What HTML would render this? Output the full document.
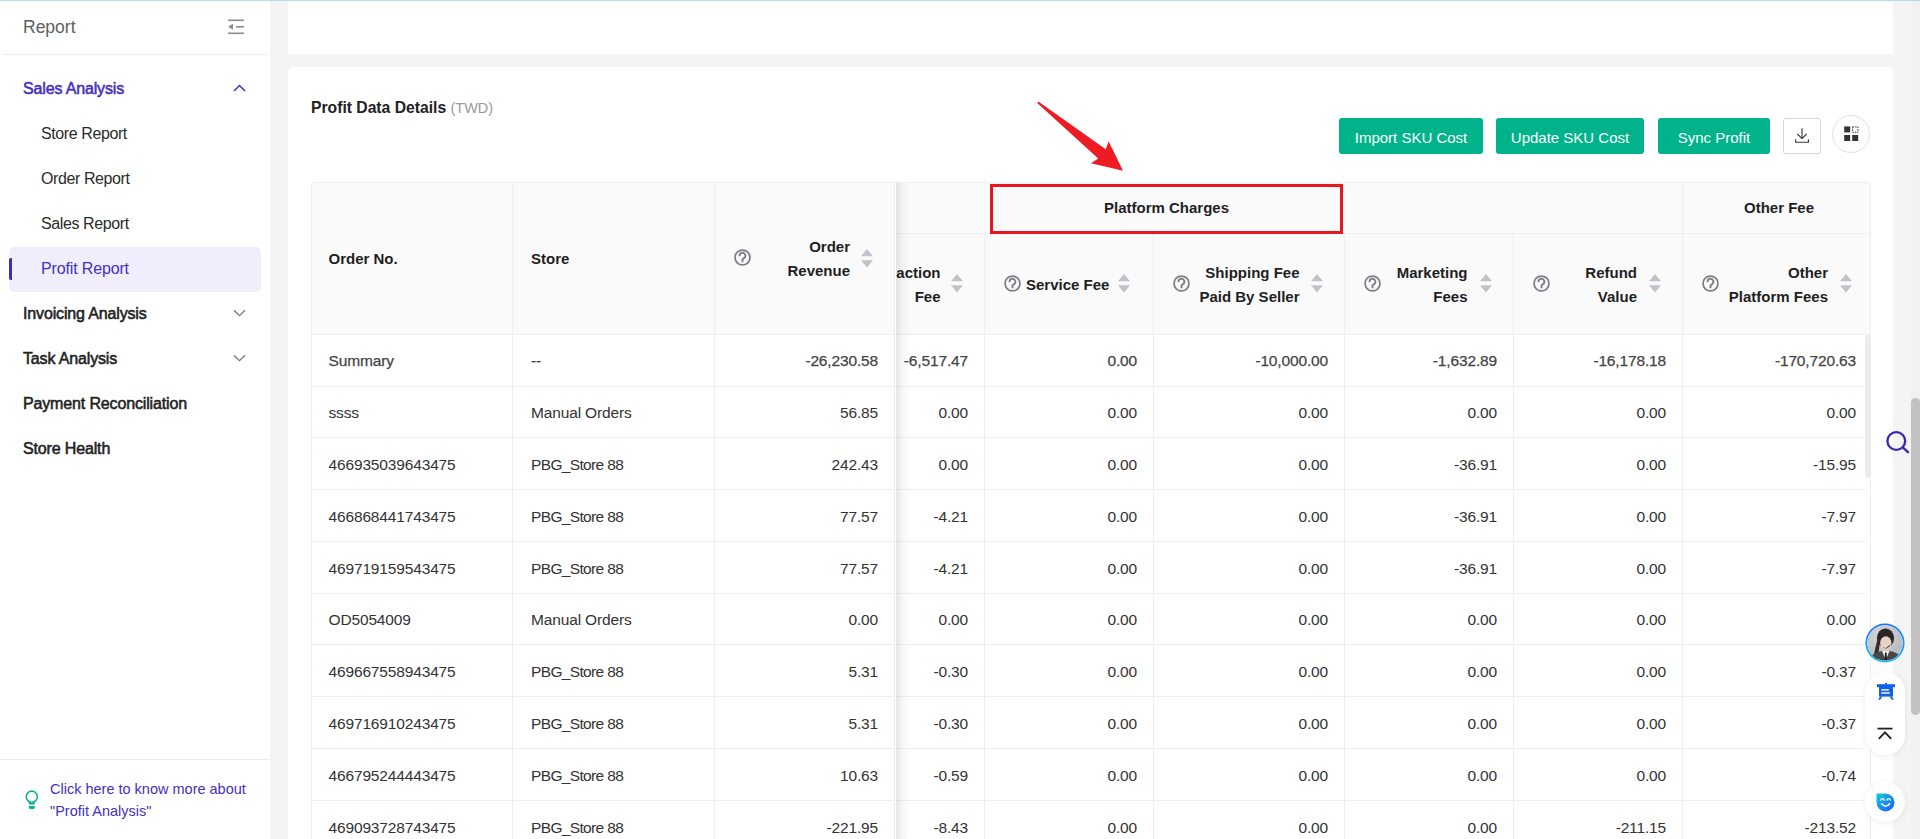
<!DOCTYPE html><html><head><meta charset="utf-8"><style>
*{box-sizing:border-box;margin:0;padding:0}
html,body{width:1920px;height:839px;overflow:hidden;background:#f4f4f4;font-family:"Liberation Sans", sans-serif;}
.a{position:absolute}
.t{position:absolute;white-space:nowrap;line-height:20px}
#side{position:absolute;left:0;top:0;width:270px;height:839px;background:#fff}
.si{position:absolute;left:41px;font-size:16px;color:#2b2b2b;letter-spacing:-0.4px;white-space:nowrap;line-height:20px}
.sh{position:absolute;left:23px;font-size:16px;font-weight:normal;-webkit-text-stroke:0.55px currentColor;color:#222;letter-spacing:-0.15px;white-space:nowrap;line-height:20px}
.cell{position:absolute;font-size:15.5px;letter-spacing:-0.15px;color:#333;white-space:nowrap;line-height:20px}
.hb{position:absolute;background:#efefef}
.ht{position:absolute;font-size:15px;font-weight:bold;color:#1f1f1f;white-space:nowrap;line-height:24px}
.q{position:absolute;width:17px;height:17px}
.so{position:absolute;width:12px;height:19px}
.btn{position:absolute;top:118px;height:36px;background:#00b38a;border-radius:3px;color:#fff;font-size:15px;line-height:39px;text-align:center;white-space:nowrap}
</style></head><body>
<div class="a" style="left:0;top:0;width:1920px;height:1px;background:#b7d9ec;z-index:50"></div>
<div id="side">
<div class="a" style="left:0;top:0;width:270px;height:55px;border-bottom:1px solid #ececec;border-radius:0 0 5px 5px"></div>
<div class="t" style="left:23px;top:17px;font-size:17.5px;color:#606060;line-height:20px">Report</div>
<svg class="a" style="left:227px;top:18px" width="18" height="18" viewBox="0 0 18 18"><rect x="1" y="1.5" width="16" height="1.6" fill="#8c8c94"/><rect x="1" y="14.5" width="16" height="1.6" fill="#8c8c94"/><rect x="9" y="8" width="8" height="1.6" fill="#8c8c94"/><path d="M1 8.8 L6 5.8 L6 11.8 Z" fill="#8c8c94"/></svg>
<div class="sh" style="top:78.5px;color:#4531bd">Sales Analysis</div>
<svg class="a" style="left:233px;top:84px" width="13" height="8" viewBox="0 0 13 8"><path d="M1 7 L6.5 1.5 L12 7" fill="none" stroke="#4531bd" stroke-width="1.5"/></svg>
<div class="si" style="top:123.5px">Store Report</div>
<div class="si" style="top:168.5px">Order Report</div>
<div class="si" style="top:213.5px">Sales Report</div>
<div class="a" style="left:9px;top:247px;width:252px;height:45px;background:#f0eefd;border-radius:5px"></div>
<div class="a" style="left:9px;top:258px;width:3px;height:22px;background:#3f2bb6;border-radius:2px 0 0 2px"></div>
<div class="si" style="top:258.5px;color:#4531bd;letter-spacing:-0.15px">Profit Report</div>
<div class="sh" style="top:303.5px">Invoicing Analysis</div>
<svg class="a" style="left:233px;top:309px" width="13" height="8" viewBox="0 0 13 8"><path d="M1 1.2 L6.5 6.7 L12 1.2" fill="none" stroke="#757582" stroke-width="1.3"/></svg>
<div class="sh" style="top:348.5px">Task Analysis</div>
<svg class="a" style="left:233px;top:354px" width="13" height="8" viewBox="0 0 13 8"><path d="M1 1.2 L6.5 6.7 L12 1.2" fill="none" stroke="#757582" stroke-width="1.3"/></svg>
<div class="sh" style="top:393.5px">Payment Reconciliation</div>
<div class="sh" style="top:438.5px">Store Health</div>
<div class="a" style="left:0;top:759px;width:270px;height:1px;background:#ececec"></div>
<svg class="a" style="left:20px;top:785px" width="25" height="30" viewBox="0 0 25 30"><circle cx="11.8" cy="11.7" r="5.5" fill="none" stroke="#0db38c" stroke-width="1.75"/><path d="M8.9 15.2 L14.7 15.2 L14.7 19.6 L8.9 19.6 Z" fill="#0db38c"/><path d="M10.2 15 L13.4 15 L11.8 17.6 Z" fill="#fff"/><circle cx="11.8" cy="11.7" r="4.62" fill="#fff"/><path d="M8.8 21 L14.8 21 L14.8 22.5 Q14.8 24.1 13.2 24.1 L10.4 24.1 Q8.8 24.1 8.8 22.5 Z" fill="#0db38c"/></svg>
<div class="t" style="left:50px;top:778px;font-size:14.5px;color:#4531bd;line-height:22px">Click here to know more about<br>"Profit Analysis"</div>
</div>
<div class="a" style="left:288px;top:-10px;width:1605px;height:64px;background:#fff"></div>
<div class="a" style="left:288px;top:67px;width:1605px;height:800px;background:#fff;border-radius:5px"></div>
<div class="t" style="left:311px;top:97.5px;font-size:15.7px;font-weight:bold;color:#222">Profit Data Details <span style="font-weight:normal;color:#9a9a9a;font-size:14.5px">(TWD)</span></div>
<div class="btn" style="left:1339px;width:144px">Import SKU Cost</div>
<div class="btn" style="left:1496px;width:148px">Update SKU Cost</div>
<div class="btn" style="left:1658px;width:112px">Sync Profit</div>
<div class="a" style="left:1783px;top:118px;width:38px;height:36px;border:1px solid #d6d6d6;border-radius:3px;background:#fff;box-shadow:0 2px 0 rgba(0,0,0,0.015)"></div>
<svg class="a" style="left:1793px;top:126px" width="18" height="18" viewBox="0 0 18 18"><path d="M9 2.2 L9 12.3 M4.3 8 L9 12.6 L13.7 8" fill="none" stroke="#333" stroke-width="1.1"/><path d="M2.6 13.2 L2.6 16.3 L15.4 16.3 L15.4 13.2" fill="none" stroke="#333" stroke-width="1.1" stroke-linejoin="round"/></svg>
<div class="a" style="left:1832px;top:115px;width:38px;height:38px;border:1px solid #e1e1ea;border-radius:50%;background:#fff"></div>
<svg class="a" style="left:1843px;top:125px" width="18" height="18" viewBox="0 0 18 18"><rect x="1.2" y="1.4" width="6" height="6" fill="#333"/><rect x="9.6" y="1.9" width="5.4" height="5.4" fill="none" stroke="#333" stroke-width="1" stroke-dasharray="1.5 1"/><rect x="1.2" y="10" width="6" height="6" fill="#333"/><rect x="9.2" y="10" width="6" height="6" fill="#333"/></svg>
<div class="a" style="left:311px;top:182px;width:1560px;height:152px;background:#fafafa;border:1px solid #efefef;border-bottom:none;border-radius:4px 4px 0 0"></div>
<div class="hb" style="left:311px;top:334px;width:1559px;height:1px"></div>
<div class="hb" style="left:895px;top:233px;width:975px;height:1px"></div>
<div class="hb" style="left:512px;top:182px;width:1px;height:152px"></div>
<div class="hb" style="left:714px;top:182px;width:1px;height:152px"></div>
<div class="hb" style="left:984px;top:233px;width:1px;height:101px"></div>
<div class="hb" style="left:1153px;top:233px;width:1px;height:101px"></div>
<div class="hb" style="left:1344px;top:233px;width:1px;height:101px"></div>
<div class="hb" style="left:1513px;top:233px;width:1px;height:101px"></div>
<div class="hb" style="left:1682px;top:182px;width:1px;height:152px"></div>
<div class="hb" style="left:1870px;top:186px;width:1px;height:700px"></div>
<div class="hb" style="left:311px;top:386px;width:1554px;height:1px"></div>
<div class="hb" style="left:311px;top:437px;width:1554px;height:1px"></div>
<div class="hb" style="left:311px;top:489px;width:1554px;height:1px"></div>
<div class="hb" style="left:311px;top:541px;width:1554px;height:1px"></div>
<div class="hb" style="left:311px;top:593px;width:1554px;height:1px"></div>
<div class="hb" style="left:311px;top:644px;width:1554px;height:1px"></div>
<div class="hb" style="left:311px;top:696px;width:1554px;height:1px"></div>
<div class="hb" style="left:311px;top:748px;width:1554px;height:1px"></div>
<div class="hb" style="left:311px;top:800px;width:1554px;height:1px"></div>
<div class="hb" style="left:311px;top:852px;width:1554px;height:1px"></div>
<div class="hb" style="left:512px;top:334px;width:1px;height:600px"></div>
<div class="hb" style="left:714px;top:334px;width:1px;height:600px"></div>
<div class="hb" style="left:984px;top:334px;width:1px;height:600px"></div>
<div class="hb" style="left:1153px;top:334px;width:1px;height:600px"></div>
<div class="hb" style="left:1344px;top:334px;width:1px;height:600px"></div>
<div class="hb" style="left:1513px;top:334px;width:1px;height:600px"></div>
<div class="hb" style="left:1682px;top:334px;width:1px;height:600px"></div>
<div class="hb" style="left:311px;top:186px;width:1px;height:700px"></div>
<div class="cell" style="left:328.5px;top:351.30px;color:#454545;-webkit-text-stroke:0.25px #454545;">Summary</div>
<div class="cell" style="left:531px;top:351.30px;color:#454545;-webkit-text-stroke:0.25px #454545;">--</div>
<div class="cell" style="right:1042px;top:351.30px;color:#454545;-webkit-text-stroke:0.25px #454545;">-26,230.58</div>
<div class="cell" style="right:952px;top:351.30px;color:#454545;-webkit-text-stroke:0.25px #454545;">-6,517.47</div>
<div class="cell" style="right:783px;top:351.30px;color:#454545;-webkit-text-stroke:0.25px #454545;">0.00</div>
<div class="cell" style="right:592px;top:351.30px;color:#454545;-webkit-text-stroke:0.25px #454545;">-10,000.00</div>
<div class="cell" style="right:423px;top:351.30px;color:#454545;-webkit-text-stroke:0.25px #454545;">-1,632.89</div>
<div class="cell" style="right:254px;top:351.30px;color:#454545;-webkit-text-stroke:0.25px #454545;">-16,178.18</div>
<div class="cell" style="right:64px;top:351.30px;color:#454545;-webkit-text-stroke:0.25px #454545;">-170,720.63</div>
<div class="cell" style="left:328.5px;top:403.13px;">ssss</div>
<div class="cell" style="left:531px;top:403.13px;">Manual Orders</div>
<div class="cell" style="right:1042px;top:403.13px;">56.85</div>
<div class="cell" style="right:952px;top:403.13px;">0.00</div>
<div class="cell" style="right:783px;top:403.13px;">0.00</div>
<div class="cell" style="right:592px;top:403.13px;">0.00</div>
<div class="cell" style="right:423px;top:403.13px;">0.00</div>
<div class="cell" style="right:254px;top:403.13px;">0.00</div>
<div class="cell" style="right:64px;top:403.13px;">0.00</div>
<div class="cell" style="left:328.5px;top:454.96px;">466935039643475</div>
<div class="cell" style="left:531px;top:454.96px;letter-spacing:-0.65px;">PBG_Store 88</div>
<div class="cell" style="right:1042px;top:454.96px;">242.43</div>
<div class="cell" style="right:952px;top:454.96px;">0.00</div>
<div class="cell" style="right:783px;top:454.96px;">0.00</div>
<div class="cell" style="right:592px;top:454.96px;">0.00</div>
<div class="cell" style="right:423px;top:454.96px;">-36.91</div>
<div class="cell" style="right:254px;top:454.96px;">0.00</div>
<div class="cell" style="right:64px;top:454.96px;">-15.95</div>
<div class="cell" style="left:328.5px;top:506.79px;">466868441743475</div>
<div class="cell" style="left:531px;top:506.79px;letter-spacing:-0.65px;">PBG_Store 88</div>
<div class="cell" style="right:1042px;top:506.79px;">77.57</div>
<div class="cell" style="right:952px;top:506.79px;">-4.21</div>
<div class="cell" style="right:783px;top:506.79px;">0.00</div>
<div class="cell" style="right:592px;top:506.79px;">0.00</div>
<div class="cell" style="right:423px;top:506.79px;">-36.91</div>
<div class="cell" style="right:254px;top:506.79px;">0.00</div>
<div class="cell" style="right:64px;top:506.79px;">-7.97</div>
<div class="cell" style="left:328.5px;top:558.62px;">469719159543475</div>
<div class="cell" style="left:531px;top:558.62px;letter-spacing:-0.65px;">PBG_Store 88</div>
<div class="cell" style="right:1042px;top:558.62px;">77.57</div>
<div class="cell" style="right:952px;top:558.62px;">-4.21</div>
<div class="cell" style="right:783px;top:558.62px;">0.00</div>
<div class="cell" style="right:592px;top:558.62px;">0.00</div>
<div class="cell" style="right:423px;top:558.62px;">-36.91</div>
<div class="cell" style="right:254px;top:558.62px;">0.00</div>
<div class="cell" style="right:64px;top:558.62px;">-7.97</div>
<div class="cell" style="left:328.5px;top:610.45px;">OD5054009</div>
<div class="cell" style="left:531px;top:610.45px;">Manual Orders</div>
<div class="cell" style="right:1042px;top:610.45px;">0.00</div>
<div class="cell" style="right:952px;top:610.45px;">0.00</div>
<div class="cell" style="right:783px;top:610.45px;">0.00</div>
<div class="cell" style="right:592px;top:610.45px;">0.00</div>
<div class="cell" style="right:423px;top:610.45px;">0.00</div>
<div class="cell" style="right:254px;top:610.45px;">0.00</div>
<div class="cell" style="right:64px;top:610.45px;">0.00</div>
<div class="cell" style="left:328.5px;top:662.28px;">469667558943475</div>
<div class="cell" style="left:531px;top:662.28px;letter-spacing:-0.65px;">PBG_Store 88</div>
<div class="cell" style="right:1042px;top:662.28px;">5.31</div>
<div class="cell" style="right:952px;top:662.28px;">-0.30</div>
<div class="cell" style="right:783px;top:662.28px;">0.00</div>
<div class="cell" style="right:592px;top:662.28px;">0.00</div>
<div class="cell" style="right:423px;top:662.28px;">0.00</div>
<div class="cell" style="right:254px;top:662.28px;">0.00</div>
<div class="cell" style="right:64px;top:662.28px;">-0.37</div>
<div class="cell" style="left:328.5px;top:714.11px;">469716910243475</div>
<div class="cell" style="left:531px;top:714.11px;letter-spacing:-0.65px;">PBG_Store 88</div>
<div class="cell" style="right:1042px;top:714.11px;">5.31</div>
<div class="cell" style="right:952px;top:714.11px;">-0.30</div>
<div class="cell" style="right:783px;top:714.11px;">0.00</div>
<div class="cell" style="right:592px;top:714.11px;">0.00</div>
<div class="cell" style="right:423px;top:714.11px;">0.00</div>
<div class="cell" style="right:254px;top:714.11px;">0.00</div>
<div class="cell" style="right:64px;top:714.11px;">-0.37</div>
<div class="cell" style="left:328.5px;top:765.94px;">466795244443475</div>
<div class="cell" style="left:531px;top:765.94px;letter-spacing:-0.65px;">PBG_Store 88</div>
<div class="cell" style="right:1042px;top:765.94px;">10.63</div>
<div class="cell" style="right:952px;top:765.94px;">-0.59</div>
<div class="cell" style="right:783px;top:765.94px;">0.00</div>
<div class="cell" style="right:592px;top:765.94px;">0.00</div>
<div class="cell" style="right:423px;top:765.94px;">0.00</div>
<div class="cell" style="right:254px;top:765.94px;">0.00</div>
<div class="cell" style="right:64px;top:765.94px;">-0.74</div>
<div class="cell" style="left:328.5px;top:817.77px;">469093728743475</div>
<div class="cell" style="left:531px;top:817.77px;letter-spacing:-0.65px;">PBG_Store 88</div>
<div class="cell" style="right:1042px;top:817.77px;">-221.95</div>
<div class="cell" style="right:952px;top:817.77px;">-8.43</div>
<div class="cell" style="right:783px;top:817.77px;">0.00</div>
<div class="cell" style="right:592px;top:817.77px;">0.00</div>
<div class="cell" style="right:423px;top:817.77px;">0.00</div>
<div class="cell" style="right:254px;top:817.77px;">-211.15</div>
<div class="cell" style="right:64px;top:817.77px;">-213.52</div>
<div class="a" style="left:895px;top:183px;width:1px;height:700px;background:#fff"></div>
<div class="a" style="left:896px;top:183px;width:14px;height:700px;background:linear-gradient(to right,rgba(0,0,0,0.095),rgba(0,0,0,0.04) 40%,rgba(0,0,0,0))"></div>
<div class="hb" style="left:894px;top:183px;width:1px;height:700px;background:#ededed"></div>
<div class="a" style="left:1865px;top:335px;width:5.5px;height:143px;background:#ececec;border-radius:3px"></div>
<div class="ht" style="left:328.5px;top:247px">Order No.</div>
<div class="ht" style="left:531px;top:247px">Store</div>
<svg class="q" style="left:734.0px;top:249.0px" viewBox="0 0 17 17"><circle cx="8.5" cy="8.5" r="7.45" fill="none" stroke="#7e7e88" stroke-width="1.75"/><path d="M5.6 7.2 A2.9 2.9 0 1 1 9.7 9.3 Q8.5 9.9 8.5 11.1 L8.5 13.3" fill="none" stroke="#7e7e88" stroke-width="1.85"/></svg>
<div class="ht" style="right:1070px;top:235px;text-align:right">Order<br>Revenue</div>
<svg class="so" style="left:861px;top:248.5px" viewBox="0 0 12 19"><path d="M0 7.3 L6 0 L12 7.3 Z" fill="#bfc2ca"/><path d="M0 11.3 L6 18.6 L12 11.3 Z" fill="#bfc2ca"/></svg>
<div class="a" style="left:895px;top:233px;width:89px;height:101px;overflow:hidden"><div class="ht" style="right:43.5px;top:28px;text-align:right">action<br>Fee</div></div>
<svg class="so" style="left:951px;top:274.0px" viewBox="0 0 12 19"><path d="M0 7.3 L6 0 L12 7.3 Z" fill="#bfc2ca"/><path d="M0 11.3 L6 18.6 L12 11.3 Z" fill="#bfc2ca"/></svg>
<svg class="q" style="left:1004.0px;top:275.0px" viewBox="0 0 17 17"><circle cx="8.5" cy="8.5" r="7.45" fill="none" stroke="#7e7e88" stroke-width="1.75"/><path d="M5.6 7.2 A2.9 2.9 0 1 1 9.7 9.3 Q8.5 9.9 8.5 11.1 L8.5 13.3" fill="none" stroke="#7e7e88" stroke-width="1.85"/></svg>
<div class="ht" style="left:1026px;top:272.5px">Service Fee</div>
<svg class="so" style="left:1118px;top:274.0px" viewBox="0 0 12 19"><path d="M0 7.3 L6 0 L12 7.3 Z" fill="#bfc2ca"/><path d="M0 11.3 L6 18.6 L12 11.3 Z" fill="#bfc2ca"/></svg>
<svg class="q" style="left:1172.8px;top:275.0px" viewBox="0 0 17 17"><circle cx="8.5" cy="8.5" r="7.45" fill="none" stroke="#7e7e88" stroke-width="1.75"/><path d="M5.6 7.2 A2.9 2.9 0 1 1 9.7 9.3 Q8.5 9.9 8.5 11.1 L8.5 13.3" fill="none" stroke="#7e7e88" stroke-width="1.85"/></svg>
<div class="ht" style="right:620.5px;top:260.5px;text-align:right">Shipping Fee<br>Paid By Seller</div>
<svg class="so" style="left:1311px;top:274.0px" viewBox="0 0 12 19"><path d="M0 7.3 L6 0 L12 7.3 Z" fill="#bfc2ca"/><path d="M0 11.3 L6 18.6 L12 11.3 Z" fill="#bfc2ca"/></svg>
<svg class="q" style="left:1363.8px;top:275.0px" viewBox="0 0 17 17"><circle cx="8.5" cy="8.5" r="7.45" fill="none" stroke="#7e7e88" stroke-width="1.75"/><path d="M5.6 7.2 A2.9 2.9 0 1 1 9.7 9.3 Q8.5 9.9 8.5 11.1 L8.5 13.3" fill="none" stroke="#7e7e88" stroke-width="1.85"/></svg>
<div class="ht" style="right:452.5px;top:260.5px;text-align:right">Marketing<br>Fees</div>
<svg class="so" style="left:1480px;top:274.0px" viewBox="0 0 12 19"><path d="M0 7.3 L6 0 L12 7.3 Z" fill="#bfc2ca"/><path d="M0 11.3 L6 18.6 L12 11.3 Z" fill="#bfc2ca"/></svg>
<svg class="q" style="left:1532.8px;top:275.0px" viewBox="0 0 17 17"><circle cx="8.5" cy="8.5" r="7.45" fill="none" stroke="#7e7e88" stroke-width="1.75"/><path d="M5.6 7.2 A2.9 2.9 0 1 1 9.7 9.3 Q8.5 9.9 8.5 11.1 L8.5 13.3" fill="none" stroke="#7e7e88" stroke-width="1.85"/></svg>
<div class="ht" style="right:283px;top:260.5px;text-align:right">Refund<br>Value</div>
<svg class="so" style="left:1649px;top:274.0px" viewBox="0 0 12 19"><path d="M0 7.3 L6 0 L12 7.3 Z" fill="#bfc2ca"/><path d="M0 11.3 L6 18.6 L12 11.3 Z" fill="#bfc2ca"/></svg>
<svg class="q" style="left:1701.5px;top:275.0px" viewBox="0 0 17 17"><circle cx="8.5" cy="8.5" r="7.45" fill="none" stroke="#7e7e88" stroke-width="1.75"/><path d="M5.6 7.2 A2.9 2.9 0 1 1 9.7 9.3 Q8.5 9.9 8.5 11.1 L8.5 13.3" fill="none" stroke="#7e7e88" stroke-width="1.85"/></svg>
<div class="ht" style="right:92px;top:260.5px;text-align:right">Other<br>Platform Fees</div>
<svg class="so" style="left:1840px;top:274.0px" viewBox="0 0 12 19"><path d="M0 7.3 L6 0 L12 7.3 Z" fill="#bfc2ca"/><path d="M0 11.3 L6 18.6 L12 11.3 Z" fill="#bfc2ca"/></svg>
<div class="ht" style="left:1104px;top:195.5px">Platform Charges</div>
<div class="ht" style="left:1744px;top:195.5px">Other Fee</div>
<div class="a" style="left:990px;top:184px;width:353px;height:50px;border:3px solid #e8161e;z-index:5"></div>
<svg class="a" style="left:1030px;top:95px;z-index:5" width="100" height="80" viewBox="1030 95 100 80"><path d="M1037.6 102.2 Q1038.2 101.6 1039 102.1 L1105.8 149.3 L1108.6 141.2 L1123 170.8 L1091 163.2 L1098.2 158.4 L1037.8 103.4 Q1037.2 102.8 1037.6 102.2 Z" fill="#ed1c24"/></svg>
<div class="a" style="left:1911px;top:0;width:9px;height:839px;background:#f1f1f1"></div>
<div class="a" style="left:1911px;top:397.5px;width:8.6px;height:317px;background:#c1c1c1;border-radius:4.3px"></div>
<svg class="a" style="left:1884px;top:429px;z-index:10" width="28" height="28" viewBox="0 0 28 28"><circle cx="12.3" cy="12" r="8.9" fill="none" stroke="#3d27b6" stroke-width="2.35"/><path d="M19 18.6 L24 23.2" stroke="#3d27b6" stroke-width="2.35" stroke-linecap="round"/></svg>
<svg class="a" style="left:1865px;top:622.5px;z-index:10" width="40" height="40" viewBox="0 0 40 40"><defs><linearGradient id="ag" x1="0" y1="0" x2="0" y2="1"><stop offset="0" stop-color="#1d6ff6"/><stop offset="1" stop-color="#14bff4"/></linearGradient><radialGradient id="bgg" cx="0.4" cy="0.3" r="0.8"><stop offset="0" stop-color="#d3d6da"/><stop offset="1" stop-color="#aeb2b8"/></radialGradient><clipPath id="ac"><circle cx="20" cy="20" r="17.6"/></clipPath></defs><circle cx="20" cy="20" r="19.6" fill="url(#ag)"/><circle cx="20" cy="20" r="17.8" fill="#fff"/><g clip-path="url(#ac)"><rect x="0" y="0" width="40" height="40" fill="url(#bgg)"/><ellipse cx="20.5" cy="15" rx="8.6" ry="9.5" fill="#2b2523"/><path d="M12.5 16 Q10 26 8 36 L13 36 Q14 26 15 18 Z" fill="#3b2c25"/><ellipse cx="20.8" cy="20.3" rx="5.6" ry="7" fill="#e9d2c6"/><path d="M15.5 14 Q20 10 26 14 L26 12 Q20 7.5 15 12 Z" fill="#2b2523"/><path d="M18 24.5 Q20.8 26.3 23.5 24.5" fill="none" stroke="#c9857c" stroke-width="1"/><path d="M25.5 22 L21.5 25" stroke="#222" stroke-width="0.9"/><path d="M3 42 L7 32 Q12 28.5 17 28 L24.5 28 Q30 28.5 34 32 L38 42 Z" fill="#48484c"/><path d="M17 28 L20.8 37 L24.5 28 Z" fill="#f3f3f3"/><path d="M20 29.5 L21.6 29.5 L22 37 L19.6 37 Z" fill="#1c1c1c"/></g></svg>
<div class="a" style="left:1865px;top:672px;width:40px;height:83px;border-radius:20px;background:#fff;box-shadow:0 1px 6px rgba(0,0,0,0.08);z-index:10"></div>
<svg class="a" style="left:1876.5px;top:683px;z-index:11" width="18" height="17" viewBox="0 0 18 17"><rect x="8" y="0" width="2" height="1.5" fill="#1162ea"/><rect x="0" y="1.2" width="18" height="3" fill="#1162ea"/><rect x="2" y="4" width="14" height="9.6" fill="#1162ea"/><rect x="4.3" y="6.2" width="7.6" height="1.4" fill="#fff"/><rect x="4.3" y="9.3" width="8.6" height="1.4" fill="#fff"/><path d="M3.2 13.4 L1 16.8 L3.2 16.8 L5.6 13.4 Z M14.8 13.4 L17 16.8 L14.8 16.8 L12.4 13.4 Z" fill="#1162ea"/></svg>
<svg class="a" style="left:1877px;top:726px;z-index:11" width="16" height="14" viewBox="0 0 16 14"><path d="M0.5 2.6 L15.5 2.6" stroke="#222" stroke-width="1.8"/><path d="M1.8 12.8 L8 6.4 L14.2 12.8" fill="none" stroke="#222" stroke-width="1.9"/></svg>
<div class="a" style="left:1865px;top:782px;width:40px;height:40px;border-radius:50%;background:#fff;box-shadow:0 1px 6px rgba(0,0,0,0.08);z-index:10"></div>
<svg class="a" style="left:1875.5px;top:792.5px;z-index:11" width="19" height="19" viewBox="0 0 19 19"><defs><linearGradient id="sg" x1="0" y1="0" x2="1" y2="1"><stop offset="0" stop-color="#12d2cf"/><stop offset="0.45" stop-color="#1495ee"/><stop offset="1" stop-color="#1d5cf0"/></linearGradient></defs><path d="M0.5 0.5 L9.5 0.5 A9 9 0 0 1 18.5 9.5 A9 9 0 0 1 9.5 18.5 A9 9 0 0 1 0.5 9.5 Z" fill="url(#sg)"/><path d="M5 7.2 A1.6 1.6 0 0 1 8.2 7.2 M11 7.2 A1.6 1.6 0 0 1 14.2 7.2" fill="none" stroke="#fff" stroke-width="1.3" stroke-linecap="round"/><path d="M5.6 10.8 Q9.6 15.6 13.6 10.8" fill="none" stroke="#fff" stroke-width="1.6" stroke-linecap="round"/></svg>
</body></html>
